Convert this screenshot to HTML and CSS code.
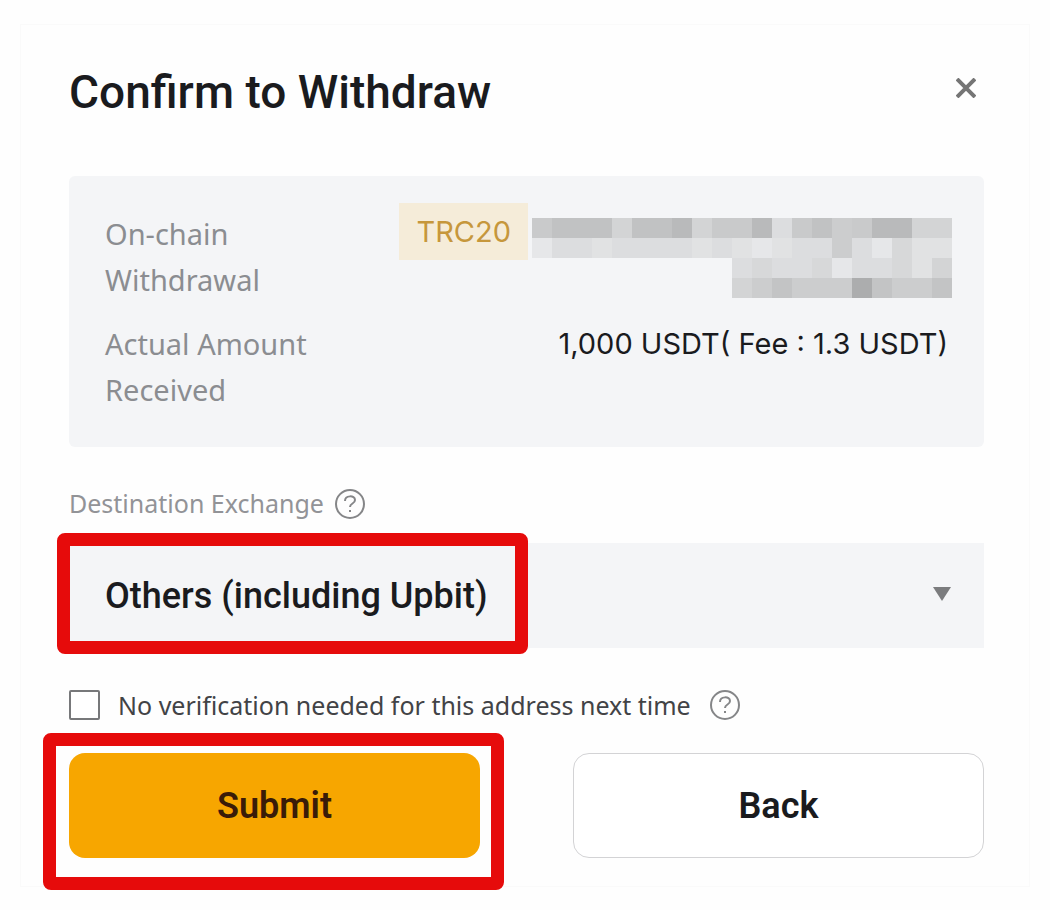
FILE: index.html
```html
<!DOCTYPE html>
<html lang="en">
<head>
    <meta charset="UTF-8">
    <meta name="viewport" content="width=device-width, initial-scale=1.0">
    <title>Confirm to Withdraw</title>
    <link rel="stylesheet" href="styles.css">
</head>
<body>
    <main class="modal">
        <header class="modal-header">
            <h1>Confirm to Withdraw</h1>
            <button type="button" class="close" aria-label="Close">
                <svg width="20" height="20" viewBox="0 0 20 20"><path d="M1 1L19 19M19 1L1 19" stroke="#757575" stroke-width="4" fill="none"/></svg>
            </button>
        </header>

        <dl class="summary">
            <div class="summary-row">
                <dt>On-chain Withdrawal</dt>
                <dd class="address">
                    <span class="tag">TRC20</span>
                    <!-- Hidden wallet address -->
                    <svg class="mosaic" width="420" height="80" viewBox="0 0 21 4" shape-rendering="crispEdges" aria-hidden="true">
                        <path fill="#dcdddf" d="M0 0h21v4H10V2H0z"/>
                        <path fill="#c9cacb" d="M0 0h1v1H0zM7 0h1v1H7zM9 0h2v1H9zM13 0h1v1h-1zM16 0h1v1h-1z"/>
                        <path fill="#c1c2c3" d="M1 0h3v1H1zM5 0h2v1H5zM14 0h1v1h-1z"/>
                        <path fill="#d3d4d5" d="M4 0h1v1H4zM8 0h1v1H8zM19 0h2v1h-2zM10 3h1v1h-1zM20 2h1v1h-1z"/>
                        <path fill="#b9babb" d="M7 0h1v1H7zM11 0h1v1h-1zM17 0h2v1h-2z"/>
                        <path fill="#cccdce" d="M15 0h1v2h-1zM11 3h1v1h-1zM13 3h3v1h-3zM18 3h2v1h-2z"/>
                        <path fill="#e6e7e9" d="M0 1h1v1H0zM11 1h1v1h-1zM17 1h1v1h-1zM15 2h1v1h-1z"/>
                        <path fill="#e1e2e3" d="M3 1h1v1H3zM8 1h1v1H8zM10 1h1v1h-1zM12 1h1v1h-1zM19 1h2v1h-2zM19 2h1v1h-1z"/>
                        <path fill="#d7d8d9" d="M18 1h1v2h-1zM11 2h1v1h-1zM14 2h1v1h-1z"/>
                        <path fill="#c3c4c5" d="M12 3h1v1h-1zM17 3h1v1h-1zM20 3h1v1h-1z"/>
                        <path fill="#acadae" d="M16 3h1v1h-1z"/>
                    </svg>
                </dd>
            </div>
            <div class="summary-row">
                <dt>Actual Amount Received</dt>
                <dd class="amount">1,000 USDT( Fee : 1.3 USDT)</dd>
            </div>
        </dl>

        <form>
            <div class="field-label">
                <label for="exchange">Destination Exchange</label>
                <svg class="help" width="32" height="32" viewBox="0 0 32 32"><circle cx="16" cy="16" r="14"/><path d="M11 13c0-6 10-6 10-1 0 4-5 3-5 7M16 22v2"/></svg>
            </div>
            <div class="select-box">
                <select id="exchange">
                    <option>Others (including Upbit)</option>
                </select>
                <svg class="arrow" width="20" height="14" viewBox="0 0 20 14"><path d="M1 0h18l-9 14z" fill="#7b7c7e"/></svg>
                <span class="highlight highlight-select"></span>
            </div>

            <div class="verify">
                <input type="checkbox" id="noVerify">
                <label for="noVerify">No verification needed for this address next time</label>
                <svg class="help" width="32" height="32" viewBox="0 0 32 32"><circle cx="16" cy="16" r="14"/><path d="M11 13c0-6 10-6 10-1 0 4-5 3-5 7M16 22v2"/></svg>
            </div>

            <div class="actions">
                <div class="action">
                    <button type="submit" class="submit">Submit</button>
                    <span class="highlight highlight-submit"></span>
                </div>
                <div class="action">
                    <button type="button" class="back">Back</button>
                </div>
            </div>
        </form>
    </main>
</body>
</html>
```
FILE: styles.css
```css
* {
    box-sizing: border-box;
}

body {
    margin: 0;
    padding: 24px 20px 20px;
    font-family: Roboto, "Noto Sans", sans-serif;
    background-color: #fefefe;
    color: #1a1b1e;
}

.modal {
    padding: 43px 45px 28px 48px;
    border: 1px solid #fafafa;
    background-color: #fefefe;
}

.modal-header {
    display: flex;
    justify-content: space-between;
    align-items: center;
    margin-bottom: 60px;
}

.modal-header h1 {
    margin: 0;
    font-size: 46px;
    line-height: 48px;
    font-weight: 500;
}

.close {
    display: flex;
    padding: 0 8px 8px;
    border: none;
    background: none;
    cursor: pointer;
}

/* Withdrawal summary */
.summary {
    margin: 0 0 38px;
    padding: 35px 32px 34px 36px;
    border-radius: 6px;
    background-color: #f4f5f7;
    font-family: "Noto Sans", sans-serif;
    font-size: 29px;
    line-height: 46px;
}

.summary-row {
    display: flex;
    justify-content: space-between;
    align-items: flex-start;
}

.summary-row + .summary-row {
    margin-top: 18px;
}

.summary dt {
    width: 230px;
    color: #8b8d91;
}

.summary dd {
    margin: 0;
    font-family: Inter, "Noto Sans", sans-serif;
}

.address {
    display: flex;
    align-items: flex-start;
    gap: 4px;
    height: 92px;
}

.tag {
    margin-top: -8px;
    padding: 0 17px;
    line-height: 57px;
    background-color: #f5ecd9;
    color: #c6973c;
}

.mosaic {
    margin-top: 7px;
}

.summary .amount {
    padding-right: 4px;
}

/* Form */
.field-label {
    display: flex;
    align-items: center;
    gap: 10px;
    margin-bottom: 21px;
    font-family: "Noto Sans", sans-serif;
    font-size: 25px;
    line-height: 37px;
    color: #929397;
}

.help {
    fill: none;
    stroke: #858688;
    stroke-width: 2;
}

.select-box {
    position: relative;
}

.select-box select {
    display: block;
    width: 100%;
    height: 105px;
    padding: 0 36px;
    border: none;
    border-radius: 0;
    appearance: none;
    background-color: #f4f5f7;
    color: #1a1b1e;
    font-family: inherit;
    font-size: 36px;
    font-weight: 500;
}

.arrow {
    position: absolute;
    top: 44px;
    right: 32px;
    pointer-events: none;
}

.verify {
    display: flex;
    align-items: center;
    margin: 40px 0 31px;
    font-family: "Noto Sans", sans-serif;
    font-size: 25px;
    line-height: 34px;
    color: #424346;
}

.verify input {
    width: 31px;
    height: 30px;
    margin: 0 18px 0 0;
    border: 2px solid #77787a;
    border-radius: 2px;
    appearance: none;
    background-color: #fff;
}

.verify input:checked {
    background-color: #f7a600;
}

.verify .help {
    margin-left: 18px;
}

.actions {
    display: grid;
    grid-template-columns: 1fr 1fr;
    gap: 93px;
}

.action {
    position: relative;
}

.action button {
    display: block;
    width: 100%;
    height: 105px;
    border: none;
    border-radius: 16px;
    font-family: inherit;
    font-size: 36px;
    font-weight: 600;
    cursor: pointer;
}

.action .submit {
    background-color: #f7a600;
    color: #3a1b08;
}

.action .back {
    border: 1px solid #d3d3d5;
    background-color: #fff;
    color: #1a1b1e;
}

/* Red frames round the controls to use */
.highlight {
    position: absolute;
    border: 13px solid #e60b0b;
    border-radius: 8px;
    pointer-events: none;
}

.highlight-select {
    top: -10px;
    left: -12px;
    width: 471px;
    height: 121px;
}

.highlight-submit {
    top: -20px;
    right: -24px;
    bottom: -32px;
    left: -26px;
}
```
